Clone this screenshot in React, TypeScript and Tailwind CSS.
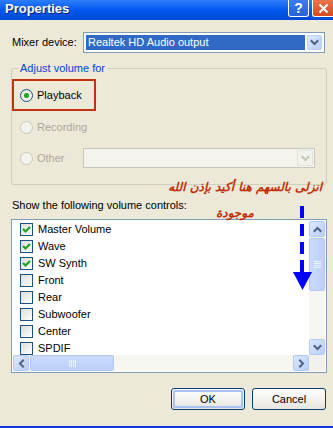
import React from 'react';

// Windows XP "Properties" dialog (volume control) with annotation overlay

const Chevron = ({ dir = 'down', color = '#4D6185' }: { dir?: 'down' | 'up' | 'left' | 'right'; color?: string }) => {
  const paths: Record<string, string> = {
    down: 'M1.5 3 L4.5 6 L7.5 3',
    up: 'M1.5 6 L4.5 3 L7.5 6',
    left: 'M6 1.5 L3 4.5 L6 7.5',
    right: 'M3 1.5 L6 4.5 L3 7.5',
  };
  return (
    <svg width="9" height="9" viewBox="0 0 9 9">
      <path d={paths[dir]} fill="none" stroke={color} strokeWidth="2" strokeLinecap="square" />
    </svg>
  );
};

const ScrollButton = ({ dir, disabled = false }: { dir: 'down' | 'up' | 'left' | 'right'; disabled?: boolean }) => (
  <div
    className={
      'w-[16px] h-[16px] flex items-center justify-center rounded-[2px] border ' +
      (disabled
        ? 'border-[#E2E1DA] bg-[#F3F3EE]'
        : 'border-[#B4C8F6] bg-gradient-to-br from-[#DDE8FE] to-[#B9CEF9]')
    }
  >
    <Chevron dir={dir} color={disabled ? '#C9C7BA' : '#4D6185'} />
  </div>
);

const Radio = ({ checked = false, disabled = false }: { checked?: boolean; disabled?: boolean }) => (
  <span
    className={
      'w-[13px] h-[13px] rounded-full border flex items-center justify-center shrink-0 ' +
      (disabled ? 'border-[#CAC8BB] bg-[#F4F3EE]' : 'border-[#1C5180] bg-gradient-to-br from-[#DCDCD7] to-white')
    }
  >
    {checked && <span className="w-[5px] h-[5px] rounded-full bg-[#21A121]" />}
  </span>
);

const Checkbox = ({ checked = false }: { checked?: boolean }) => (
  <span className="w-[13px] h-[13px] border border-[#1C5180] bg-gradient-to-br from-[#DCDCD7] to-white flex items-center justify-center shrink-0">
    {checked && (
      <svg width="11" height="11" viewBox="0 0 11 11">
        <path d="M2 5 L4.5 7.5 L9 3" fill="none" stroke="#21A121" strokeWidth="2.2" />
      </svg>
    )}
  </span>
);

const XpButton = ({ label, isDefault = false }: { label: string; isDefault?: boolean }) => (
  <div className="w-[74px] h-[22px] rounded-[3px] border border-[#003C74] bg-gradient-to-b from-white to-[#E6E5DE] p-[1px]">
    <div
      className={
        'w-full h-full rounded-[2px] flex items-center justify-center text-black ' +
        (isDefault ? 'border-2 border-[#A9C2F3]' : 'border border-transparent')
      }
    >
      {label}
    </div>
  </div>
);

const controls = [
  { name: 'Master Volume', checked: true },
  { name: 'Wave', checked: true },
  { name: 'SW Synth', checked: true },
  { name: 'Front', checked: false },
  { name: 'Rear', checked: false },
  { name: 'Subwoofer', checked: false },
  { name: 'Center', checked: false },
  { name: 'SPDIF', checked: false },
];

export default function App() {
  return (
    <div className="relative w-[333px] h-[428px] overflow-hidden bg-[#ECE9D8] flex flex-col text-[11px] leading-[13px] text-black font-['Liberation_Sans',Arial,sans-serif]">
      {/* Title bar */}
      <div className="h-[20px] shrink-0 flex items-start justify-between bg-gradient-to-b from-[#2C7DFB] via-[#0058EE] to-[#0049D6]">
        <span className="pl-[5px] pt-[1px] text-[13px] leading-[15px] font-bold text-white [text-shadow:1px_1px_0_#0A1F6E]">
          Properties
        </span>
        <div className="flex gap-[3px]">
          <div className="w-[21px] h-[17px] rounded-b-[3px] border border-t-0 border-white bg-gradient-to-b from-[#3C7CF2] to-[#2661D8] flex items-center justify-center text-white font-bold text-[14px] leading-none">
            ?
          </div>
          <div className="w-[21px] h-[17px] rounded-bl-[3px] border border-t-0 border-r-0 border-white bg-gradient-to-b from-[#E8744E] to-[#D54B1E] flex items-center justify-center">
            <svg width="11" height="11" viewBox="0 0 11 11">
              <path d="M1.5 1.5 L9.5 9.5 M9.5 1.5 L1.5 9.5" stroke="white" strokeWidth="2" />
            </svg>
          </div>
        </div>
      </div>

      {/* Mixer device */}
      <div className="mt-[12px] h-[21px] flex items-center">
        <span className="pl-[12px] w-[83px]">Mixer device:</span>
        <div className="w-[242px] h-[21px] border border-[#7F9DB9] bg-white flex items-center p-[2px] gap-[2px]">
          <div className="flex-1 h-[15px] bg-[#316AC5] text-white flex items-center pl-[2px]">Realtek HD Audio output</div>
          <div className="w-[15px] h-[15px] rounded-[2px] border border-[#B9D0FD] bg-gradient-to-br from-[#DDE8FE] to-[#B9CEF9] flex items-center justify-center">
            <Chevron dir="down" />
          </div>
        </div>
      </div>

      {/* Adjust volume for */}
      <fieldset className="mt-[9px] ml-[11px] w-[316px] h-[123px] border border-[#D0D0BF] rounded-[3px] p-0">
        <legend className="ml-[6px] px-[2px] text-[#0046D5]">Adjust volume for</legend>
        <div className="mt-[4px] w-[84px] h-[32px] border-2 border-[#C1330F] flex items-center pl-[6px] gap-[4px]">
          <Radio checked />
          <span>Playback</span>
        </div>
        <div className="mt-[8px] h-[17px] flex items-center pl-[8px] gap-[4px] text-[#ACA899]">
          <Radio disabled />
          <span>Recording</span>
        </div>
        <div className="mt-[12px] h-[20px] flex items-center">
          <div className="w-[71px] flex items-center pl-[8px] gap-[4px] text-[#ACA899]">
            <Radio disabled />
            <span>Other</span>
          </div>
          <div className="w-[232px] h-[20px] border border-[#C9C7BA] bg-[#F4F3EE] flex items-center justify-end p-[1px]">
            <ScrollButton dir="down" disabled />
          </div>
        </div>
      </fieldset>

      <div className="mt-[14px] pl-[12px]">Show the following volume controls:</div>

      {/* List of controls */}
      <div className="mt-[7px] ml-[11px] w-[316px] h-[154px] border border-[#7F9DB9] bg-white p-[1px] grid grid-cols-[296px_16px] grid-rows-[134px_16px]">
        <div className="flex flex-col overflow-hidden">
          {controls.map((c) => (
            <div key={c.name} className="h-[17px] shrink-0 flex items-center pl-[7px] gap-[5px]">
              <Checkbox checked={c.checked} />
              <span>{c.name}</span>
            </div>
          ))}
        </div>
        <div className="flex flex-col bg-[#F7F7F2]">
          <ScrollButton dir="up" />
          <div className="mt-[1px] h-[53px] rounded-[2px] border border-[#B4C8F6] bg-gradient-to-r from-[#CADAFC] to-[#BCD0FA] flex items-center justify-center">
            <div className="flex flex-col gap-[1px]">
              {[0, 1, 2, 3].map((i) => (
                <span key={i} className="w-[7px] h-[1px] bg-[#EEF4FE]" />
              ))}
            </div>
          </div>
          <div className="flex-1" />
          <ScrollButton dir="down" />
        </div>
        <div className="flex bg-[#F7F7F2]">
          <ScrollButton dir="left" />
          <div className="ml-[1px] w-[84px] h-[16px] rounded-[2px] border border-[#B4C8F6] bg-gradient-to-b from-[#CADAFC] to-[#BCD0FA] flex items-center justify-center gap-[1px]">
            {[0, 1, 2, 3].map((i) => (
              <span key={i} className="w-[1px] h-[7px] bg-[#EEF4FE]" />
            ))}
          </div>
          <div className="flex-1" />
          <ScrollButton dir="right" />
        </div>
        <div className="bg-[#F3F1EA]" />
      </div>

      {/* Buttons */}
      <div className="mt-[15px] flex justify-end gap-[7px] pr-[7px]">
        <XpButton label="OK" isDefault />
        <XpButton label="Cancel" />
      </div>

      <div className="mt-auto h-[2px] bg-[#0A3BD8]" />

      {/* Annotation overlay */}
      <span
        dir="rtl"
        className="absolute right-[11px] top-[180px] whitespace-nowrap text-[12px] leading-[15px] font-bold italic text-[#C0300A] font-['DejaVu_Sans',sans-serif]"
      >
        انزلى بالسهم هنا أكيد بإذن الله
      </span>
      <span
        dir="rtl"
        className="absolute left-[216px] top-[206px] whitespace-nowrap text-[12px] leading-[15px] font-bold italic text-[#C0300A] font-['DejaVu_Sans',sans-serif]"
      >
        موجودة
      </span>
      <svg className="absolute left-[292px] top-[206px]" width="21" height="85" viewBox="0 0 21 85">
        <path d="M10 0 L10 67" stroke="#0000FF" strokeWidth="4" strokeDasharray="12 6" />
        <path d="M1 66 L20 66 L10.5 84 Z" fill="#0000FF" />
      </svg>
    </div>
  );
}
